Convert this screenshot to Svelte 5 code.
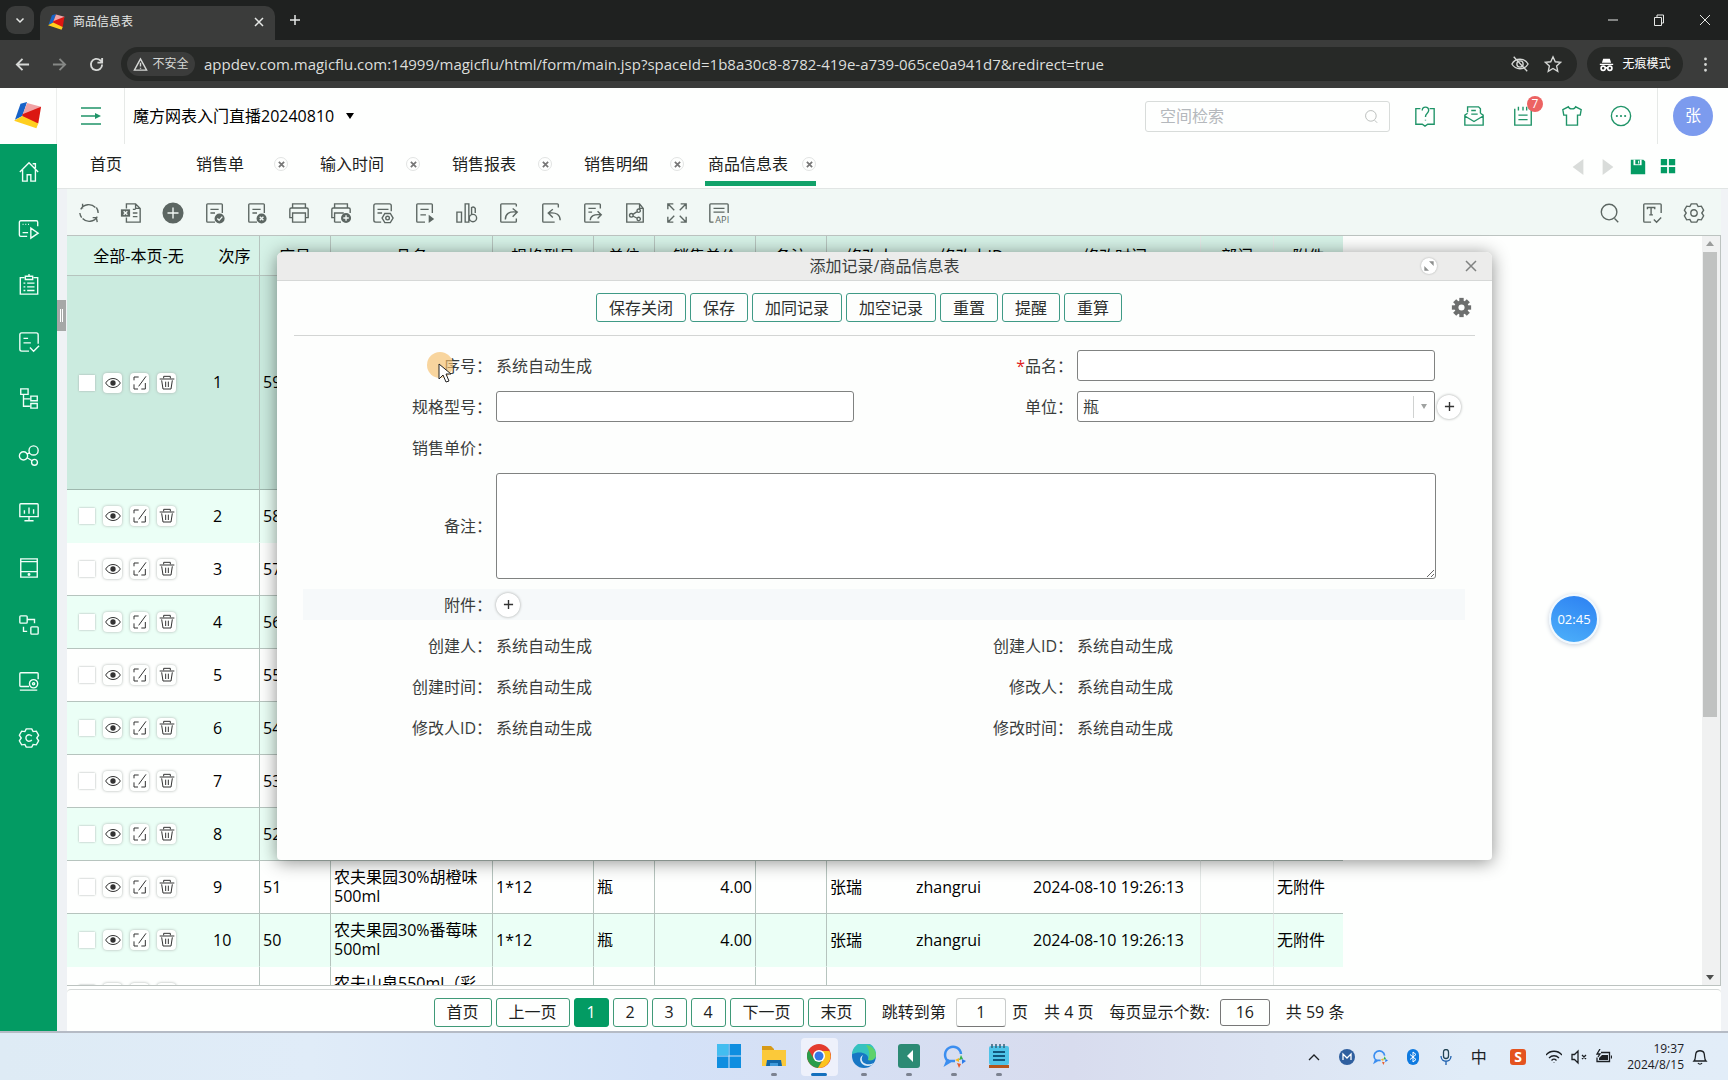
<script lang="ts">
  const circ = (x: number, y: number, r: number) =>
    `M${x - r} ${y}a${r} ${r} 0 1 0 ${2 * r} 0a${r} ${r} 0 1 0 ${-2 * r} 0`;

  interface Icon {
    d?: string; // stroked part
    f?: string; // filled part
    c?: string; // light strokes over the filled part
    t?: string;
  }

  const hex = "M9 2h6l1.500 3 3.500-.5 2.500 4.500-2 3 2 3-2.500 4.500-3.500-.5L15 22H9l-1.500-3-3.500.5L1.500 15l2-3-2-3L4 4.500l3.500.5z";
  const pageTop = "M20 12V3a1 1 0 0 0-1-1H4a1 1 0 0 0-1 1v18a1 1 0 0 0 1 1h8";

  // every icon sits on a 24 x 24 grid
  const icons: Record<string, Icon> = {
    home: { d: "M2 12 12 2l10 10M5 9.500V22h5v-7h4v7h5V9.500M16 3h3v5" },
    play: { d: "M10 20H3a1.500 1.500 0 0 1-1.500-1.500v-14A1.500 1.500 0 0 1 3 3h17a1.500 1.500 0 0 1 1.500 1.500V9M5 16h6M14 11l8 5.500-8 5.500zM5 7h1M8 7h1M11 7h1" },
    clipboard: { d: "M7 4H2.500v18h19V4H17M8 2.500h8V6H8zM6 10h2M10 10h8M6 14h2M10 14h8M6 18h2M10 18h8M12 0v2" },
    docCheck: { d: "M22 14V4a2 2 0 0 0-2-2H4a2 2 0 0 0-2 2v16a2 2 0 0 0 2 2h8M6 8h5M6 13h8M13 18l4 4 6-6" },
    tree: { d: "M3 2h8v6H3zM6 8v13h7M6 13h7M14 10h7v5h-7zM14 18h7v5h-7z" },
    share: { d: circ(6, 13, 4.5) + circ(17, 7, 5) + circ(18, 20, 3.2) + "M10 11l3-2M10 15l5 3" },
    monitor: { d: "M3 3h18a1 1 0 0 1 1 1v13H2V4a1 1 0 0 1 1-1zM12 17v4M7 21.500h10M7 10v4M12 7v7M17 9v5" },
    tablet: { d: "M3 2h18v20H3zM3 5h18M3 16h18", f: circ(12, 19, 1.6) },
    flow: { d: "M3 2h6a1 1 0 0 1 1 1v6a1 1 0 0 1-1 1H3a1 1 0 0 1-1-1V3a1 1 0 0 1 1-1zM15 14h6a1 1 0 0 1 1 1v6a1 1 0 0 1-1 1h-6a1 1 0 0 1-1-1v-6a1 1 0 0 1 1-1zM10 6h8v4M6 14v5h4" },
    screen: { d: "M12 18H3a1 1 0 0 1-1-1V4a1 1 0 0 1 1-1h18a1 1 0 0 1 1 1v6M2 22h19" + circ(17, 15, 4.5) + circ(17, 15, 1.2) },
    gearC: { d: hex + "M15 10a3.500 3.500 0 1 0 0 4" },
    refresh: { d: "M3 8a10 10 0 0 1 16-2M5 2v5M21 16a10 10 0 0 1-16 2M21 22l-1-5-4 0M22 12a10 10 0 0 0-2-6M2 12a10 10 0 0 0 2 5" },
    excel: { d: "M7 7V2h10l5 5v15H7v-5M17 2v5h5M14 8h3M14 12h5M14 16h5", f: "M1 8h10v8H1z", c: "M4 10l4 4M8 10l-4 4" },
    add: { f: circ(12, 12, 11.5), c: "M12 6v12M6 12h12" },
    pageOk: { d: pageTop + "M7 8h9M7 12h5", f: circ(17, 18, 5.5), c: "M14.500 18l2 2 3.500-4" },
    pageNo: { d: pageTop + "M7 8h9M7 12h5", f: circ(17, 18, 5.5), c: "M15 16l4 4M19 16l-4 4" },
    print: { d: "M5 6V2h14v4M5 17H2V8a1.500 1.500 0 0 1 1.500-1.500h17A1.500 1.500 0 0 1 22 8v9h-3M5 12h14v10H5z" },
    printAdd: { d: "M5 6V2h14v4M5 17H2V8a1.500 1.500 0 0 1 1.500-1.500h17A1.500 1.500 0 0 1 22 8v4M5 22V12h10M5 22h7", f: circ(17.5, 17.5, 5.5), c: "M17.500 14.500v6M14.500 17.500h6" },
    pageGear: { d: "M21 10V4a2 2 0 0 0-2-2H4a2 2 0 0 0-2 2v16a2 2 0 0 0 2 2h6M6 8h12M6 12h5M14 12.500h6l3 5-3 5h-6l-3-5z" + circ(17, 17.5, 2) },
    pagePlay: { d: pageTop + "M7 8h9M7 14h6", f: "M16 14l6 4.500-6 4.500z" },
    chart: { d: "M1 11h5v11H1zM10 2h4v20h-4zM21 12V7a3 3 0 0 0-4-1v7" + circ(18.5, 17.5, 4) },
    shareOut: { d: "M20 5V3a1 1 0 0 0-1-1H4a1 1 0 0 0-1 1v18a1 1 0 0 0 1 1h15a1 1 0 0 0 1-1v-3M8 19c0-6 4-9 12-8M16 7l5 4-5 5" },
    back: { d: "M20 6V3a1 1 0 0 0-1-1H4a1 1 0 0 0-1 1v18a1 1 0 0 0 1 1h12M22 20c0-6-4-9-12-8M14 8l-5 4 5 5" },
    pageOut: { d: "M20 7V3a1 1 0 0 0-1-1H4a1 1 0 0 0-1 1v18a1 1 0 0 0 1 1h15M7 7h8M7 11h4M9 20c0-5 4-7 12-6M17 10l4 4-4 4" },
    pageShare: { d: "M17 2H3v20h18V7zM17 2v5h4M9 14l6-4M9 15l6 3" + circ(8, 14.5, 2) + circ(16, 9.5, 1.8) + circ(16, 18.5, 1.8) },
    expand: { d: "M2 8V2h6M2 2l7 7M16 2h6v6M22 2l-7 7M2 16v6h6M2 22l7-7M16 22h6v-6M22 22l-7-7" },
    api: { d: "M22 12V3a1 1 0 0 0-1-1H3a1 1 0 0 0-1 1v18a1 1 0 0 0 1 1h3M6 7h12M6 11h12", t: "API" },
    search: { d: circ(11, 11, 8.5) + "M17 18l4 4" },
    text: { d: "M22 12V3a1 1 0 0 0-1-1H4a1 1 0 0 0-1 1v18a1 1 0 0 0 1 1h7M7 8V6h8v2M11 6v8M9 14h4M14 19l3 3 5-5" },
    gear: { d: hex + circ(12, 12, 3.5) },
    bookHelp: { d: "M7 4H2v17h7l3 2 3-2h7V4h-5M9 6c0-5 7-5 7 0 0 3-3.500 3-3.500 7M12.500 16v1" },
    mail: { d: "M5 8V2h12l2 2v5M5 9l-3 2v11h20V11l-3-2M2 12l10 6 10-6M9 6h5M9 10h7" },
    task: { d: "M3 6V22h18V4h-3M3 6V4M7 2v4M12 2v4M16 2v4M7 11h10M7 16h10" },
    shirt: { d: "M8 2c1 3 7 3 8 0l6 3-1 6h-3v11H6V11H3L2 5z" },
    more: { d: circ(12, 12, 10.5), f: circ(7.5, 12, 1.2) + circ(12, 12, 1.2) + circ(16.5, 12, 1.2) },
    eye: { d: "M1 12c5-9 17-9 22 0-5 9-17 9-22 0z", f: circ(12, 12, 4) },
    edit: { d: "M10 3H3v5M3 14v7h6M14 21h6v-9M21 2 10 17" },
    trash: { d: "M1 6h22M7 5V2h10v3M4 8l2 13h12l2-13M10 10v8M14 10v8" },
  };

  const sideIcons = ["home", "play", "clipboard", "docCheck", "tree", "share", "monitor", "tablet", "flow", "screen", "gearC"];
  const toolIcons = ["refresh", "excel", "add", "pageOk", "pageNo", "print", "printAdd", "pageGear", "pagePlay", "chart", "shareOut", "back", "pageOut", "pageShare", "expand", "api"];
  const headIcons = ["bookHelp", "mail", "task", "shirt", "more"];
  const openTabs = ["销售单", "输入时间", "销售报表", "销售明细", "商品信息表"];
  const activeTab = "商品信息表";

  const colWidths = [143, 50, 71, 162, 101, 61, 101, 71, 86, 117, 171, 73, 69];
  const columns = ["全部-本页-无", "次序", "序号", "品名", "规格型号", "单位", "销售单价", "备注", "修改人", "修改人ID", "修改时间", "部门", "附件"];

  const products: Record<number, string> = {
    9: "农夫果园30%胡橙味500ml",
    10: "农夫果园30%番莓味500ml",
    11: "农夫山泉550ml（彩装）",
  };
  const details = ["1*12", "瓶", "4.00", "", "张瑞", "zhangrui", "2024-08-10 19:26:13", "", "无附件"];
  const rows = Array.from({ length: 11 }, (_, i) => {
    const name = products[i + 1] ?? "";
    return { no: i + 1, id: 59 - i, name, rest: name ? details : details.map(() => "") };
  });

  const actions = ["保存关闭", "保存", "加同记录", "加空记录", "重置", "提醒", "重算"];
  const autoText = "系统自动生成";
  const metaRows = [
    ["创建人", "创建人ID"],
    ["创建时间", "修改人"],
    ["修改人ID", "修改时间"],
  ];

  let address = $state("appdev.com.magicflu.com:14999/magicflu/html/form/main.jsp?spaceId=1b8a30c8-8782-419e-a739-065ce0a941d7&redirect=true");
  let unit = $state("瓶");
  let page = $state("1");
  let pageSize = $state("16");
</script>

{#snippet icon(name: string)}
  {@const i = icons[name]}
  <svg class="icon" viewBox="0 0 24 24" aria-hidden="true">
    {#if i.d}<path class="line" d={i.d} />{/if}
    {#if i.f}<path class="solid" d={i.f} />{/if}
    {#if i.c}<path class="cut" d={i.c} />{/if}
    {#if i.t}<text x="8" y="23" font-size="10">{i.t}</text>{/if}
  </svg>
{/snippet}

{#snippet cube()}
  <svg class="cube" viewBox="0 0 30 30" aria-hidden="true">
    <path d="M7 2 14 0 9 15 1 19z" fill="#1763c8" />
    <path d="M14 1 29 5 24 15 9 14z" fill="#f0a3a5" />
    <path d="M9 13 29 5 26 23 9 21z" fill="#dc1712" />
    <path d="M0 20 9 15 26 23 24 28z" fill="#ffcf1f" />
  </svg>
{/snippet}

{#snippet chat()}
  <svg class="chat" viewBox="0 0 24 24" aria-hidden="true">
    <path d="M13 17H6a8 8 0 1 1 13-7M6 15l-2 5 5-3" fill="none" stroke="#3b8ef0" stroke-width="2.500" />
    <path d="M19 11l2 4-4 1z" fill="#37b34a" />
    <path d="M20 15l4 2-4 3z" fill="#2d7be8" />
    <path d="M15 19l4 1-2 4z" fill="#e85b2b" />
    <path d="M13 16l4-2 0 4z" fill="#f6b51e" />
  </svg>
{/snippet}

<div class="screen">
  <!-- Browser frame -->
  <div class="tabstrip">
    <button class="tab-search" aria-label="搜索标签页">
      <svg viewBox="0 0 12 12"><path d="M2.500 4.500 6 8l3.500-3.500" /></svg>
    </button>
    <div class="browser-tab">
      {@render cube()}
      <span>商品信息表</span>
      <button aria-label="关闭标签页"><svg viewBox="0 0 12 12"><path d="M2 2l8 8M10 2l-8 8" /></svg></button>
    </div>
    <button class="new-tab" aria-label="新标签页"><svg viewBox="0 0 12 12"><path d="M6 1v10M1 6h10" /></svg></button>
    <div class="window-controls">
      <button aria-label="最小化"><svg viewBox="0 0 12 12"><path d="M1 6h10" /></svg></button>
      <button aria-label="还原"><svg viewBox="0 0 12 12"><path d="M1.500 3.500h7v8h-7zM4 3V1h6.500v8H9" /></svg></button>
      <button aria-label="关闭"><svg viewBox="0 0 12 12"><path d="M1 1l10 10M11 1 1 11" /></svg></button>
    </div>
  </div>
  <div class="navbar">
    <button aria-label="后退"><svg viewBox="0 0 16 16"><path d="M15 8H2M8 2 2 8l6 6" /></svg></button>
    <button class="dim" aria-label="前进"><svg viewBox="0 0 16 16"><path d="M1 8h13M8 2l6 6-6 6" /></svg></button>
    <button aria-label="刷新"><svg viewBox="0 0 16 16"><path d="M14 8a6 6 0 1 1-2-4.500L14 5M14 1v5H9" /></svg></button>
    <div class="address">
      <button class="site-chip">
        <svg viewBox="0 0 16 16"><path d="M8 2 1.500 14h13zM8 6v4M8 11.500v1" /></svg>不安全
      </button>
      <input aria-label="地址" spellcheck="false" bind:value={address} />
      <svg class="addr-icon" viewBox="0 0 20 20"><path d="M1 10c4-7 14-7 18 0-4 7-14 7-18 0zM3 2l15 16" /><circle cx="10" cy="10" r="3.500" /></svg>
      <svg class="addr-icon" viewBox="0 0 20 20"><path d="M10 2l2.500 5.500 6 .6-4.500 4 1.300 6L10 15l-5.300 3.100 1.300-6-4.500-4 6-.6z" /></svg>
    </div>
    <button class="incognito">
      <svg viewBox="0 0 18 18"><path d="M5 2h8l1.500 5h-11zM1 8h16v1.500H1z" fill="currentColor" stroke="none" /><circle cx="5" cy="13.500" r="2.500" /><circle cx="13" cy="13.500" r="2.500" /><path d="M7.500 13h3" /></svg>
      无痕模式
    </button>
    <button class="kebab" aria-label="菜单"><svg viewBox="0 0 16 16"><path d="M8 2v.1M8 8v.1M8 14v.1" /></svg></button>
  </div>

  <div class="app">
    <aside>
      <div class="brand">{@render cube()}</div>
      <nav class="side">
        {#each sideIcons as name}
          <button aria-label={name}>{@render icon(name)}</button>
        {/each}
      </nav>
    </aside>

    <main>
      <header>
        <button class="collapse" aria-label="展开菜单">
          <svg viewBox="0 0 20 20"><path d="M0 2h20M0 10h14M0 18h20" /><path class="tip" d="M14 7l6 3-6 3z" /></svg>
        </button>
        <button class="space">魔方网表入门直播20240810 <i class="caret"></i></button>
        <label class="search">
          <input type="text" placeholder="空间检索" aria-label="空间检索" />
          {@render icon("search")}
        </label>
        {#each headIcons as name}
          <button class="head-icon" aria-label={name}>
            {@render icon(name)}
            {#if name === "task"}<span class="badge">7</span>{/if}
          </button>
        {/each}
        <div class="user"><span class="avatar">张</span></div>
      </header>

      <div class="tabs">
        <div class="tab first"><a href="#home">首页</a></div>
        {#each openTabs as t}
          <div class="tab" class:active={t === activeTab}>
            <a href="#tab">{t}</a>
            <button aria-label="关闭{t}"><svg viewBox="0 0 8 8"><path d="M1 1l6 6M7 1 1 7" /></svg></button>
          </div>
        {/each}
        <div class="tab-tools">
          <button aria-label="向左"><svg viewBox="0 0 20 20"><path d="M16 1v18L4 10z" fill="#d9dcda" /></svg></button>
          <button aria-label="向右"><svg viewBox="0 0 20 20"><path d="M4 1v18l12-9z" fill="#d9dcda" /></svg></button>
          <button aria-label="保存布局">
            <svg viewBox="0 0 20 20"><path d="M2 2h14l2 2v14H2z" fill="#039b63" /><path d="M5 2h9v6H5z" fill="#fff" /><path d="M7 2h5v5H7z" fill="#039b63" /><path d="M10 3h1v3h-1z" fill="#fff" /></svg>
          </button>
          <button aria-label="全部标签">
            <svg viewBox="0 0 20 20"><path d="M2 1h7v7H2zM11 1h7v7h-7zM2 10h7v7H2zM11 10h7v7h-7z" fill="#039b63" /></svg>
          </button>
        </div>
      </div>

      <div class="work">
        <div class="gutter"><button class="handle" aria-label="收起"></button></div>
        <div class="panel">
          <div class="tools">
            {#each toolIcons as name}
              <button aria-label={name}>{@render icon(name)}</button>
            {/each}
            <span class="grow"></span>
            {#each ["search", "text", "gear"] as name}
              <button aria-label={name}>{@render icon(name)}</button>
            {/each}
          </div>

          <div class="grid-box">
            <div class="grid-view">
              <table>
                <colgroup>
                  {#each colWidths as w}<col style="width: {w}px" />{/each}
                </colgroup>
                <thead>
                  <tr>{#each columns as c}<th>{c}</th>{/each}</tr>
                </thead>
                <tbody>
                  {#each rows as r}
                    <tr class:selected={r.no === 1} class:flush={r.no === 2 || r.no === 10}>
                      <td>
                        <div class="ops">
                          <input type="checkbox" aria-label="选择{r.no}" />
                          {#each ["eye", "edit", "trash"] as name}
                            <button aria-label={name}>{@render icon(name)}</button>
                          {/each}
                        </div>
                      </td>
                      <td>{r.no}</td>
                      <td>{r.id}</td>
                      <td>{r.name}</td>
                      {#each r.rest as cell, i}
                        <td class:num={i === 2}>{cell}</td>
                      {/each}
                    </tr>
                  {/each}
                </tbody>
              </table>
            </div>
            <div class="scrollbar" aria-hidden="true">
              <i class="up"></i>
              <div class="track"><div class="thumb"></div></div>
              <i class="down"></i>
            </div>
          </div>

          <div class="pager">
            <button>首页</button>
            <button>上一页</button>
            {#each ["1", "2", "3", "4"] as p}
              <button class="page" class:current={p === page}>{p}</button>
            {/each}
            <button>下一页</button>
            <button>末页</button>
            <label>跳转到第 <input type="text" bind:value={page} /> 页</label>
            <span>共 4 页</span>
            <label>每页显示个数: <input class="size" type="text" bind:value={pageSize} /></label>
            <span>共 59 条</span>
          </div>
        </div>
        <div class="edge"></div>
      </div>
    </main>
  </div>

  <!-- Taskbar -->
  <footer class="taskbar">
    <span></span>
    <div class="dock">
      <button class="quiet" aria-label="开始">
        <svg viewBox="0 0 24 24"><path d="M0 0h11.500v11.500H0zM12.500 0H24v11.500H12.500zM0 12.500h11.500V24H0zM12.500 12.500H24V24H12.500z" fill="#0f8ee0" /><path d="M0 0h11.500v11.500H0z" fill="#43bdf0" /></svg>
      </button>
      <button aria-label="文件资源管理器">
        <svg viewBox="0 0 24 24"><path d="M0 2h9l3 3v5H0z" fill="#d79a17" /><path d="M0 6h24v16H0z" fill="#fbc93a" /><path d="M5 16h14l1 6H4z" fill="#1166a8" /><path d="M8 19h8v3H8z" fill="#3f9adb" /></svg>
      </button>
      <button class="on" aria-label="Chrome">
        <svg viewBox="0 0 24 24"><circle cx="12" cy="12" r="12" fill="#e33b2e" /><path d="M1.600 6A12 12 0 0 0 11 24l5-9H7z" fill="#2a9d4a" /><path d="M22.500 7H12l4.500 8L11 24A12 12 0 0 0 22.500 7z" fill="#fcc31e" /><circle cx="12" cy="12" r="6" fill="#fff" /><circle cx="12" cy="12" r="4.500" fill="#3577e5" /></svg>
      </button>
      <button aria-label="Edge">
        <svg viewBox="0 0 24 24"><circle cx="12" cy="12" r="12" fill="#1777c4" /><path d="M0 10a12 12 0 0 1 24 1c0 4-4 6-8 5 2-6-7-10-16-6z" fill="#35c2c0" /><path d="M14 1c7 1 10 6 10 10s-4 6-8 5c2-4 2-9-2-15z" fill="#5fd26a" /><path d="M11 11c-4 6 2 12 11 8l-2 2c-9 4-16-6-9-10z" fill="#dcecf8" /></svg>
      </button>
      <button aria-label="录屏">
        <svg viewBox="0 0 24 24"><rect x="1" width="22" height="24" rx="3" fill="#2c8a74" /><path d="M16 6v12l-6-6z" fill="#fff" /></svg>
      </button>
      <button aria-label="企业微信">{@render chat()}</button>
      <button aria-label="记事本">
        <svg viewBox="0 0 24 24"><rect x="2" y="2" width="20" height="19" rx="2" fill="#4ec3e8" /><path d="M2 21h20v3H2z" fill="#b5561c" /><path d="M6 8h12M6 12h12M6 16h12" stroke="#10567c" stroke-width="2" /><path d="M5 0v4M9 0v4M13 0v4M17 0v4" stroke="#33617a" stroke-width="1.500" /></svg>
      </button>
    </div>
    <div class="tray">
      <button aria-label="显示隐藏的图标"><svg viewBox="0 0 16 16"><path d="M3 11l5-5 5 5" /></svg></button>
      <button aria-label="M"><svg viewBox="0 0 16 16"><circle cx="8" cy="8" r="8" fill="#2f5f9f" stroke="none" /><path d="M4 11V5l4 4 4-4v6" stroke="#fff" /></svg></button>
      <button aria-label="企业微信">{@render chat()}</button>
      <button aria-label="蓝牙"><svg viewBox="0 0 16 16"><rect x="2" width="12" height="16" rx="6" fill="#0e7ae0" stroke="none" /><path d="M5 5.500l6 5-3 2.500V3l3 2.500-6 5" stroke="#fff" stroke-width="1" /></svg></button>
      <button aria-label="麦克风"><svg viewBox="0 0 16 16"><rect x="5.500" y="0.500" width="5" height="9" rx="2.500" stroke="#245" /><path d="M3 7c0 7 10 7 10 0M8 12v4" stroke="#1c5fae" /></svg></button>
      <button class="ime" aria-label="输入法">中</button>
      <button class="sogou" aria-label="搜狗"><span>S</span></button>
      <button class="tight" aria-label="网络"><svg viewBox="0 0 16 16"><path d="M0 6c4-5 12-5 16 0M3 9c3-3 7-3 10 0M5.500 11.500c2-2 3-2 5 0M8 13.500v.5" /></svg></button>
      <button class="tight" aria-label="音量"><svg viewBox="0 0 16 16"><path d="M1 5.500h2.500L7 2v12l-3.500-3.500H1zM11 6l4 4M15 6l-4 4" /></svg></button>
      <button class="tight" aria-label="电池"><svg viewBox="0 0 16 16"><path d="M5 3.500h8.500v9H1v-4" /><path d="M3 10V9l3-3h6v5H3z" fill="currentColor" stroke="none" /><path d="M15.500 6.500v3M4 0 1 5h3L2 8" /></svg></button>
      <time>19:37<br />2024/8/15</time>
      <button class="bell" aria-label="通知"><svg viewBox="0 0 16 16"><path d="M2 12c2-2 1-5 2-8s7-3 8 0 0 6 2 8zM6 14c1 1.500 3 1.500 4 0" /></svg></button>
    </div>
  </footer>

  <!-- Record dialog -->
  <div class="dialog" role="dialog" aria-label="添加记录/商品信息表">
    <div class="dialog-head">
      <h2>添加记录/商品信息表</h2>
      <button class="zoom" aria-label="最大化"><svg viewBox="0 0 12 12"><path d="M6 2h4v4zM6 10H2V6z" /></svg></button>
      <button class="close" aria-label="关闭"><svg viewBox="0 0 12 12"><path d="M1 1l10 10M11 1 1 11" /></svg></button>
    </div>
    <div class="dialog-bar">
      <div class="actions">
        {#each actions as a}<button type="button">{a}</button>{/each}
      </div>
      <button class="cog" aria-label="设置">
        <svg viewBox="-12 -12 24 24">
          {#each [0, 45, 90, 135] as a}<rect x="-2.500" y="-11" width="5" height="22" transform="rotate({a})" />{/each}
          <circle r="8" /><circle class="hole" r="3.500" />
        </svg>
      </button>
    </div>
    <form>
      <div class="row">
        <span class="label">序号：</span><span class="value">{autoText}</span>
        <label class="label" for="name"><b>*</b>品名：</label><span class="value"><input id="name" type="text" /></span>
      </div>
      <div class="row">
        <label class="label" for="spec">规格型号：</label><span class="value"><input id="spec" type="text" /></span>
        <label class="label" for="unit">单位：</label>
        <span class="value">
          <span class="combo"><select id="unit" bind:value={unit}><option>瓶</option></select></span>
          <button type="button" class="plus" aria-label="添加单位"><svg viewBox="0 0 12 12"><path d="M6 1v10M1 6h10" /></svg></button>
        </span>
      </div>
      <div class="row"><span class="label">销售单价：</span></div>
      <div class="row wide">
        <label class="label" for="remark">备注：</label><textarea id="remark"></textarea>
      </div>
      <div class="row shaded">
        <span class="label">附件：</span>
        <span class="value"><button type="button" class="plus" aria-label="添加附件"><svg viewBox="0 0 12 12"><path d="M6 1v10M1 6h10" /></svg></button></span>
      </div>
      {#each metaRows as [left, right]}
        <div class="row">
          <span class="label">{left}：</span><span class="value">{autoText}</span>
          <span class="label">{right}：</span><span class="value">{autoText}</span>
        </div>
      {/each}
    </form>
  </div>

  <div class="timer">02:45</div>
  <div class="click-dot"></div>
  <svg class="pointer" viewBox="0 0 14 20"><path d="M1 1v15l4-4 3 7 3-1-3-7h5z" /></svg>
</div>

<style>
  :global(body) {
    margin: 0;
  }

  .screen,
  .screen :global(*) {
    box-sizing: border-box;
  }

  .screen {
    position: relative;
    display: flex;
    flex-direction: column;
    height: 100vh;
    overflow: hidden;
    font-family: "Open Sans", "Noto Sans CJK SC", sans-serif;
    font-size: 16px;
    line-height: 20px;
    color: #1d2120;
    background: #fefffe;
  }

  button,
  input,
  select,
  textarea {
    margin: 0;
    padding: 0;
    border: 0;
    border-radius: 0;
    background: none;
    color: inherit;
    font: inherit;
    outline: none;
  }

  button {
    display: flex;
    align-items: center;
    justify-content: center;
    flex: none;
    white-space: nowrap;
  }

  svg {
    display: block;
    flex: none;
    fill: none;
    stroke-width: 1.5;
  }

  .icon {
    width: 22px;
    height: 22px;
  }
  .icon .line {
    stroke: currentColor;
  }
  .icon .solid,
  .icon text {
    fill: currentColor;
  }
  .icon .cut {
    stroke: #f1f8f5;
  }

  /* Browser frame */
  .tabstrip {
    display: flex;
    align-items: center;
    height: 40px;
    flex: none;
    padding-left: 6px;
    background: #1f2120;
    color: #e6e8e6;
  }
  .tabstrip svg:not(.cube) {
    width: 12px;
    height: 12px;
    stroke: currentColor;
  }
  .tab-search {
    width: 28px;
    height: 28px;
    border-radius: 9px;
    background: #3b3c3b;
  }
  .browser-tab {
    display: flex;
    align-items: center;
    align-self: flex-end;
    gap: 8px;
    width: 235px;
    height: 34px;
    margin-left: 6px;
    padding: 0 10px 2px 8px;
    border-radius: 10px 10px 0 0;
    background: #3b3c3b;
    font-size: 12px;
  }
  .browser-tab .cube {
    width: 17px;
    height: 17px;
  }
  .browser-tab span {
    flex: 1;
  }
  .new-tab {
    width: 40px;
    height: 28px;
  }
  .window-controls {
    display: flex;
    margin-left: auto;
  }
  .window-controls button {
    width: 46px;
    height: 40px;
  }
  .window-controls svg {
    stroke-width: 1;
  }

  .navbar {
    display: flex;
    align-items: center;
    height: 48px;
    flex: none;
    padding: 0 4px;
    background: #3b3c3b;
    color: #d6d8d6;
  }
  .navbar svg {
    width: 15px;
    height: 15px;
    stroke: currentColor;
    stroke-width: 2;
  }
  .navbar > button {
    width: 37px;
    height: 34px;
  }
  .navbar > .dim {
    color: #868886;
  }
  .address {
    display: flex;
    align-items: center;
    flex: 1;
    height: 34px;
    margin: 0 10px 0 6px;
    padding: 0 15px 0 6px;
    gap: 9px;
    border-radius: 17px;
    background: #272927;
  }
  .site-chip {
    gap: 4px;
    width: 68px;
    height: 24px;
    border-radius: 12px;
    background: #3b3c3b;
    font-size: 12px;
  }
  .site-chip svg {
    stroke-width: 1.5;
  }
  .address input {
    flex: 1;
    min-width: 0;
    height: 24px;
    font-size: 15px;
    color: #dcdedc;
  }
  .navbar .addr-icon {
    width: 18px;
    height: 18px;
    margin-left: 6px;
    stroke-width: 1.5;
  }
  .navbar > .incognito {
    width: 96px;
    gap: 8px;
    margin-right: 4px;
    border-radius: 17px;
    background: #272927;
    color: #fff;
    font-size: 12px;
  }
  .navbar > .kebab svg {
    stroke-width: 3;
    stroke-linecap: round;
  }

  /* App shell */
  .app {
    display: flex;
    flex: 1;
    min-height: 0;
  }
  aside {
    display: flex;
    flex-direction: column;
    width: 57px;
    flex: none;
    background: #039b63;
  }
  .brand {
    display: flex;
    align-items: center;
    justify-content: center;
    height: 56px;
    border-right: 1px solid #eceeec;
    background: #fefffe;
  }
  .brand .cube {
    width: 30px;
    height: 28px;
  }
  .side {
    display: grid;
    height: 622px;
    color: #f2fff9;
  }

  main {
    display: flex;
    flex-direction: column;
    flex: 1;
    min-width: 0;
  }
  header {
    display: flex;
    align-items: center;
    height: 56px;
    flex: none;
    color: #1f9468;
  }
  .collapse {
    width: 68px;
    height: 56px;
    border-right: 1px solid #e6e9e7;
  }
  .collapse svg {
    width: 20px;
    height: 20px;
    stroke: #1f9468;
  }
  .collapse .tip {
    fill: #1f9468;
    stroke: none;
  }
  .space {
    gap: 12px;
    margin-right: auto;
    padding-left: 8px;
    color: #000;
  }
  .caret {
    border: 4px solid transparent;
    border-top: 6px solid #000;
    border-bottom: 0;
  }
  .search {
    display: flex;
    align-items: center;
    width: 245px;
    height: 31px;
    margin-right: 10px;
    padding: 0 10px 0 14px;
    border: 1px solid #d8dcda;
    border-radius: 3px;
    color: #b8bcba;
  }
  .search input {
    flex: 1;
    min-width: 0;
  }
  .search input::placeholder {
    color: #b4b8bc;
    opacity: 1;
  }
  .search .icon {
    width: 15px;
    height: 15px;
  }
  .head-icon {
    position: relative;
    width: 49px;
    height: 40px;
  }
  .badge {
    position: absolute;
    top: 0;
    right: 4px;
    width: 16px;
    height: 16px;
    border-radius: 8px;
    background: #ec6362;
    color: #fff;
    font-size: 12px;
    line-height: 16px;
  }
  .user {
    display: flex;
    align-items: center;
    height: 56px;
    margin-left: 12px;
    padding: 0 15px;
    border-left: 1px solid #e6e9e7;
  }
  .avatar {
    width: 40px;
    height: 40px;
    border-radius: 50%;
    background: #7c9bee;
    color: #fff;
    line-height: 38px;
    text-align: center;
  }

  .tabs {
    display: flex;
    align-items: flex-start;
    gap: 21px;
    height: 45px;
    flex: none;
    padding-left: 6px;
    border-bottom: 1px solid #e1e5e4;
  }
  .tab {
    display: flex;
    align-items: center;
    justify-content: space-between;
    width: 111px;
    height: 42px;
    padding-top: 3px;
    border-bottom: 5px solid transparent;
  }
  .tab.first {
    width: 86px;
    margin-right: 7px;
  }
  .tab.active {
    border-color: #12a26a;
  }
  .tab a {
    width: 86px;
    height: 26px;
    color: inherit;
    line-height: 26px;
    text-align: center;
    text-decoration: none;
  }
  .tab button {
    width: 14px;
    height: 14px;
    border: 1px solid #e2e4e3;
    border-radius: 50%;
    color: #777;
  }
  .tab button svg {
    width: 7px;
    height: 7px;
    stroke: currentColor;
    stroke-width: 2;
  }
  .tab-tools {
    display: flex;
    margin: 9px 45px 0 auto;
  }
  .tab-tools button {
    width: 30px;
    height: 28px;
  }
  .tab-tools svg {
    width: 18px;
    height: 18px;
  }

  .work {
    display: flex;
    flex: 1;
    min-height: 0;
  }
  .gutter {
    width: 10px;
    flex: none;
    padding-top: 111px;
    background: #eff2f5;
  }
  .handle {
    width: 9px;
    height: 31px;
    border: solid #a6a8a7;
    border-width: 9px 0;
    background: linear-gradient(90deg, #a6a8a7 3px, #fff 3px 4px, #a6a8a7 4px 5px, #fff 5px 6px, #a6a8a7 6px);
  }
  .edge {
    width: 7px;
    flex: none;
    background: #f1f3f6;
  }
  .panel {
    display: flex;
    flex-direction: column;
    flex: 1;
    min-width: 0;
  }
  .tools {
    display: flex;
    align-items: center;
    height: 46px;
    flex: none;
    padding: 2px 6px 0 1px;
    background: #f1f8f5;
    color: #5c6662;
  }
  .tools button {
    width: 42px;
    height: 32px;
  }
  .grow {
    flex: 1;
  }

  /* Record table */
  .grid-box {
    display: flex;
    flex: 1;
    min-height: 0;
    border: solid #bcc3c0;
    border-width: 1px 1px 1px 0;
  }
  .grid-view {
    flex: 1;
    min-width: 0;
    overflow: hidden;
  }
  table {
    width: 1276px;
    table-layout: fixed;
    border-spacing: 0;
    color: #000;
  }
  th,
  td {
    padding: 0 3px;
    border-right: 1px solid #b6c4be;
    border-bottom: 1px solid #b6c4be;
    font-weight: 400;
    line-height: 19px;
    text-align: left;
  }
  th {
    height: 40px;
    padding: 2px 0 0;
    background: #d6f2e7;
    text-align: center;
    white-space: nowrap;
  }
  td {
    height: 53px;
  }
  th:nth-child(1),
  td:nth-child(1),
  th:nth-child(9),
  td:nth-child(9),
  th:nth-child(10),
  td:nth-child(10),
  th:last-child,
  td:last-child {
    border-right: 0;
  }
  th:nth-child(n + 11),
  td:nth-child(n + 11) {
    border-right-color: #e4e9e7;
  }
  tbody tr:nth-child(even) {
    background: #ebfff6;
  }
  .selected {
    background: #cbebdf;
  }
  .selected td {
    height: 214px;
    border-bottom-color: #9fb8ae;
  }
  .flush td {
    border-bottom-color: transparent;
  }
  .num {
    text-align: right;
  }
  .ops {
    display: flex;
    align-items: center;
    gap: 8px;
    padding-left: 9px;
  }
  .ops input {
    appearance: none;
    width: 16px;
    height: 16px;
    background: #fff;
    box-shadow: 0 0 2px #a4acaa;
  }
  .ops button {
    width: 19px;
    height: 20px;
    border-radius: 4px;
    background: #fefffe;
    box-shadow: 0 0 3px #a9b0ad;
    color: #333;
  }
  .ops .icon {
    width: 16px;
    height: 16px;
  }

  .scrollbar {
    display: flex;
    flex-direction: column;
    align-items: center;
    justify-content: space-between;
    width: 18px;
    flex: none;
    padding: 5px 2px 5px 0;
    background: #f0f1f1;
  }
  .track {
    flex: 1;
    width: 14px;
    margin: 6px 0 8px;
  }
  .thumb {
    height: 65%;
    background: #c0c2c1;
  }
  .up,
  .down {
    border: 4px solid transparent;
  }
  .up {
    border-top: 0;
    border-bottom: 5px solid #9a9c9b;
  }
  .down {
    border-bottom: 0;
    border-top: 5px solid #4c4e4d;
  }

  .pager {
    display: flex;
    align-items: center;
    justify-content: center;
    gap: 4px;
    height: 42px;
    flex: none;
    margin-top: 3px;
    padding: 3px 10px 0 0;
    border-top: 1px solid #d5d9d8;
    border-radius: 4px;
  }
  .pager button {
    height: 29px;
    padding: 0 12px;
    border: 1px solid #3f9a78;
    border-radius: 3px;
  }
  .pager .page {
    width: 35px;
    padding: 0;
  }
  .pager .current {
    border-color: #039b63;
    background: #039b63;
    color: #fff;
  }
  .pager label,
  .pager span {
    display: flex;
    align-items: center;
    margin-left: 12px;
    white-space: pre;
  }
  .pager input {
    width: 50px;
    height: 29px;
    margin: 0 2px 0 6px;
    border: 1px solid #c9cccb;
    border-bottom-color: #777;
    border-radius: 3px;
    text-align: center;
  }
  .pager .size {
    height: 27px;
    margin-right: 0;
    border-color: #777;
  }

  /* Taskbar */
  .taskbar {
    display: grid;
    grid-template-columns: 1fr auto 1fr;
    height: 49px;
    flex: none;
    border-top: 2px solid #b5bbc5;
    background: linear-gradient(90deg, #deebf5 0, #e0ecf8 18%, #d4e2f8 38%, #d8dcee 62%, #e0ecf8 85%, #e2edf8 100%);
  }
  .dock {
    display: flex;
    align-items: center;
  }
  .dock button {
    flex-direction: column;
    justify-content: flex-end;
    gap: 5px;
    width: 37px;
    height: 38px;
    margin: 0 4px;
    border-radius: 4px;
  }
  .dock button::after {
    content: "";
    width: 6px;
    height: 3px;
    border-radius: 2px;
    background: #7c8290;
  }
  .dock .quiet::after {
    background: transparent;
  }
  .dock .on {
    background: #eef1fb;
  }
  .dock .on::after {
    width: 16px;
    background: #1470bd;
  }
  .dock svg {
    width: 24px;
    height: 24px;
  }
  .tray {
    display: flex;
    align-items: center;
    justify-content: flex-end;
    padding-right: 20px;
    color: #1c2024;
  }
  .tray svg {
    width: 16px;
    height: 16px;
    stroke: currentColor;
    stroke-width: 1.3;
  }
  .tray .chat {
    stroke: none;
  }
  .tray button {
    width: 33px;
  }
  .tray .ime {
    font-size: 16px;
  }
  .tray .sogou {
    width: 46px;
  }
  .sogou span {
    width: 16px;
    height: 16px;
    border-radius: 3px;
    background: #e4531f;
    color: #fff;
    font-size: 14px;
    font-weight: 700;
    line-height: 16px;
  }
  .tray .tight {
    width: 25px;
  }
  time {
    margin: 0 8px 0 11px;
    font-size: 12px;
    line-height: 16px;
    text-align: right;
  }
  .tray .bell {
    width: 16px;
  }

  /* Dialog */
  .dialog {
    position: absolute;
    top: 252px;
    left: 277px;
    right: 236px;
    min-height: 608px;
    border-radius: 6px 6px 4px 4px;
    background: #fdfefd;
    box-shadow: 0 2px 18px rgba(0, 0, 0, 0.45);
    color: #3a3d3c;
  }
  .dialog-head {
    display: grid;
    grid-template-columns: 1fr auto 1fr;
    align-items: center;
    height: 29px;
    border-bottom: 1px solid #d6d8d7;
    border-radius: 6px 6px 0 0;
    background: #ececeb;
  }
  h2 {
    grid-column: 2;
    margin: 0;
    font-size: 16px;
    font-weight: 400;
  }
  .dialog-head button {
    grid-row: 1;
    grid-column: 3;
    justify-self: end;
    width: 16px;
    height: 16px;
  }
  .dialog-head .zoom {
    margin-right: 55px;
    border-radius: 50%;
    background: #fff;
    box-shadow: 0 0 2px #a5a7a6;
  }
  .zoom svg {
    width: 14px;
    height: 14px;
    fill: #8d8f8e;
  }
  .dialog-head .close {
    margin-right: 13px;
  }
  .close svg {
    width: 12px;
    height: 12px;
    stroke: #808281;
  }
  .dialog-bar {
    display: flex;
    margin: 0 17px;
    padding: 12px 0 13px;
    border-bottom: 1px solid #d3d5d4;
  }
  .actions {
    display: flex;
    flex: 1;
    justify-content: center;
    gap: 4px;
  }
  .actions button {
    height: 29px;
    padding: 0 12px;
    border: 1px solid #3f9a86;
    border-radius: 3px;
    color: #2c2f2e;
  }
  .cog {
    justify-content: flex-end;
    width: 51px;
    padding-right: 3px;
  }
  .cog svg {
    width: 21px;
    height: 21px;
    fill: #6d6f6e;
  }
  .cog .hole {
    fill: #fdfefd;
  }
  form {
    display: flex;
    flex-direction: column;
    gap: 10px;
    padding: 14px 27px 14px 26px;
  }
  .row {
    display: grid;
    grid-template-columns: 193px 1fr 193px 1fr;
    align-items: center;
    min-height: 31px;
  }
  .row.wide {
    grid-template-columns: 193px 1fr;
  }
  .row.shaded {
    background: #f6f9fa;
  }
  .label {
    padding-right: 4px;
    text-align: right;
  }
  .label b {
    color: #e02020;
    font-weight: 400;
  }
  .value {
    display: flex;
    align-items: center;
    gap: 2px;
  }
  .value input,
  .combo {
    width: 358px;
    height: 31px;
    border: 1px solid #808281;
    border-radius: 3px;
    background: #fff;
  }
  .combo {
    display: flex;
    align-items: center;
    flex: none;
  }
  .combo::after {
    content: "";
    margin: 0 7px;
    border: 3px solid transparent;
    border-top: 5px solid #a0a2a1;
    border-bottom: 0;
  }
  .combo select {
    flex: 1;
    height: 22px;
    padding-left: 5px;
    appearance: none;
    border-right: 1px solid #d0d2d1;
  }
  textarea {
    height: 106px;
    margin-right: 29px;
    border: 1px solid #808281;
    border-radius: 3px;
    background: #fff;
    resize: vertical;
  }
  .plus {
    width: 24px;
    height: 24px;
    border-radius: 50%;
    background: #fff;
    box-shadow: 0 0 3px #9fa2a1;
  }
  .plus svg {
    width: 11px;
    height: 11px;
    stroke: #333;
  }

  /* Floating timer and pointer */
  .timer {
    position: absolute;
    top: 594px;
    right: 129px;
    width: 50px;
    height: 50px;
    border: 2px solid #eff8ff;
    border-radius: 50%;
    background: linear-gradient(200deg, #2c80f2, #4db1fa);
    box-shadow: 0 1px 5px #c5cdda;
    color: #fff;
    font-size: 13px;
    line-height: 46px;
    text-align: center;
  }
  .click-dot {
    position: absolute;
    top: 352px;
    left: 427px;
    width: 26px;
    height: 26px;
    border-radius: 50%;
    background: rgba(246, 190, 108, 0.65);
  }
  .pointer {
    position: absolute;
    top: 363px;
    left: 438px;
    width: 14px;
    height: 20px;
    fill: #fff;
    stroke: #222;
    stroke-width: 1;
  }
</style>
